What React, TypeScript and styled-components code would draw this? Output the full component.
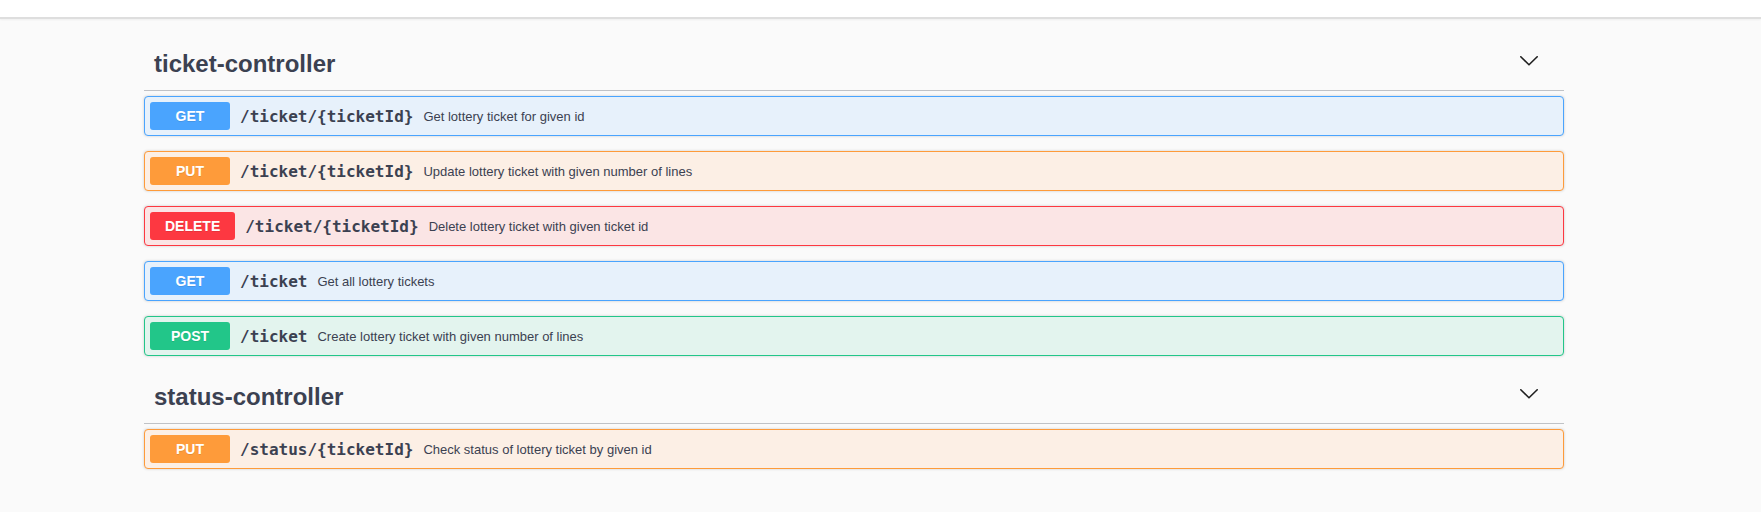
import React from "react";
import styled, { createGlobalStyle } from "styled-components";

const GlobalStyle = createGlobalStyle`
  html, body {
    margin: 0;
    padding: 0;
    background: #fafafa;
    font-family: "Liberation Sans", Arial, sans-serif;
  }
`;

type Method = "get" | "put" | "delete" | "post";

const palette: Record<Method, { main: string; bg: string }> = {
  get: { main: "#4aa4fe", bg: "#e7f1fb" },
  put: { main: "#fe9b3a", bg: "#fcefe5" },
  delete: { main: "#fd3841", bg: "#fbe5e5" },
  post: { main: "#22c689", bg: "#e3f4ee" },
};

const TopBar = styled.div`
  height: 17px;
  background: #ffffff;
  border-bottom: 2px solid #dedede;
  box-shadow: 0 1px 2px rgba(0, 0, 0, 0.05);
`;

const Wrapper = styled.main`
  width: 1420px;
  margin: 19px 0 0 144px;
  padding-bottom: 14px;
`;

const Section = styled.section`
  display: flex;
  flex-direction: column;
`;

const TagHeader = styled.div`
  display: flex;
  align-items: center;
  padding: 10px 20px 10px 10px;
  border-bottom: 1px solid rgba(59, 65, 81, 0.3);
  margin-bottom: 5px;
`;

const TagTitle = styled.h3`
  flex: 1;
  margin: 0;
  font-size: 24px;
  line-height: 32px;
  font-weight: 700;
  color: #3b4151;
`;

const ExpandButton = styled.button`
  display: flex;
  align-items: center;
  justify-content: center;
  border: none;
  background: none;
  padding: 0;
  margin: 0 6px 6px 0;
  cursor: pointer;
`;

const OpBlock = styled.div<{ $method: Method }>`
  border: 1px solid ${(p) => palette[p.$method].main};
  background: ${(p) => palette[p.$method].bg};
  border-radius: 4px;
  box-shadow: 0 0 3px rgba(0, 0, 0, 0.19);
  margin-bottom: 15px;
`;

const Summary = styled.div`
  display: flex;
  align-items: center;
  padding: 5px;
`;

const MethodBadge = styled.span<{ $method: Method }>`
  min-width: 80px;
  box-sizing: border-box;
  padding: 6px 15px;
  border-radius: 3px;
  background: ${(p) => palette[p.$method].main};
  color: #ffffff;
  font-family: "Liberation Sans", Arial, sans-serif;
  font-size: 14px;
  line-height: 16px;
  font-weight: 700;
  text-align: center;
  text-shadow: 0 1px 0 rgba(0, 0, 0, 0.1);
`;

const Path = styled.span`
  padding: 0 10px;
  font-family: "DejaVu Sans Mono", "Liberation Mono", monospace;
  font-size: 16px;
  font-weight: 700;
  color: #3b4151;
`;

const Description = styled.span`
  font-size: 13px;
  color: #3b4151;
`;

const Chevron = () => (
  <svg width="18" height="10" viewBox="0 0 18 10" fill="none">
    <polyline
      points="0.8,0.8 9,8.8 17.2,0.8"
      stroke="#1f1f1f"
      strokeWidth="1.6"
      strokeLinecap="round"
      strokeLinejoin="round"
    />
  </svg>
);

type Op = { method: Method; path: string; desc: string };

const sections: { tag: string; ops: Op[] }[] = [
  {
    tag: "ticket-controller",
    ops: [
      { method: "get", path: "/ticket/{ticketId}", desc: "Get lottery ticket for given id" },
      { method: "put", path: "/ticket/{ticketId}", desc: "Update lottery ticket with given number of lines" },
      { method: "delete", path: "/ticket/{ticketId}", desc: "Delete lottery ticket with given ticket id" },
      { method: "get", path: "/ticket", desc: "Get all lottery tickets" },
      { method: "post", path: "/ticket", desc: "Create lottery ticket with given number of lines" },
    ],
  },
  {
    tag: "status-controller",
    ops: [
      { method: "put", path: "/status/{ticketId}", desc: "Check status of lottery ticket by given id" },
    ],
  },
];

export default function App() {
  return (
    <>
      <GlobalStyle />
      <TopBar />
      <Wrapper>
        {sections.map((s) => (
          <Section key={s.tag}>
            <TagHeader>
              <TagTitle>{s.tag}</TagTitle>
              <ExpandButton aria-label="collapse">
                <Chevron />
              </ExpandButton>
            </TagHeader>
            {s.ops.map((op, i) => (
              <OpBlock key={i} $method={op.method}>
                <Summary>
                  <MethodBadge $method={op.method}>{op.method.toUpperCase()}</MethodBadge>
                  <Path>{op.path}</Path>
                  <Description>{op.desc}</Description>
                </Summary>
              </OpBlock>
            ))}
          </Section>
        ))}
      </Wrapper>
    </>
  );
}
